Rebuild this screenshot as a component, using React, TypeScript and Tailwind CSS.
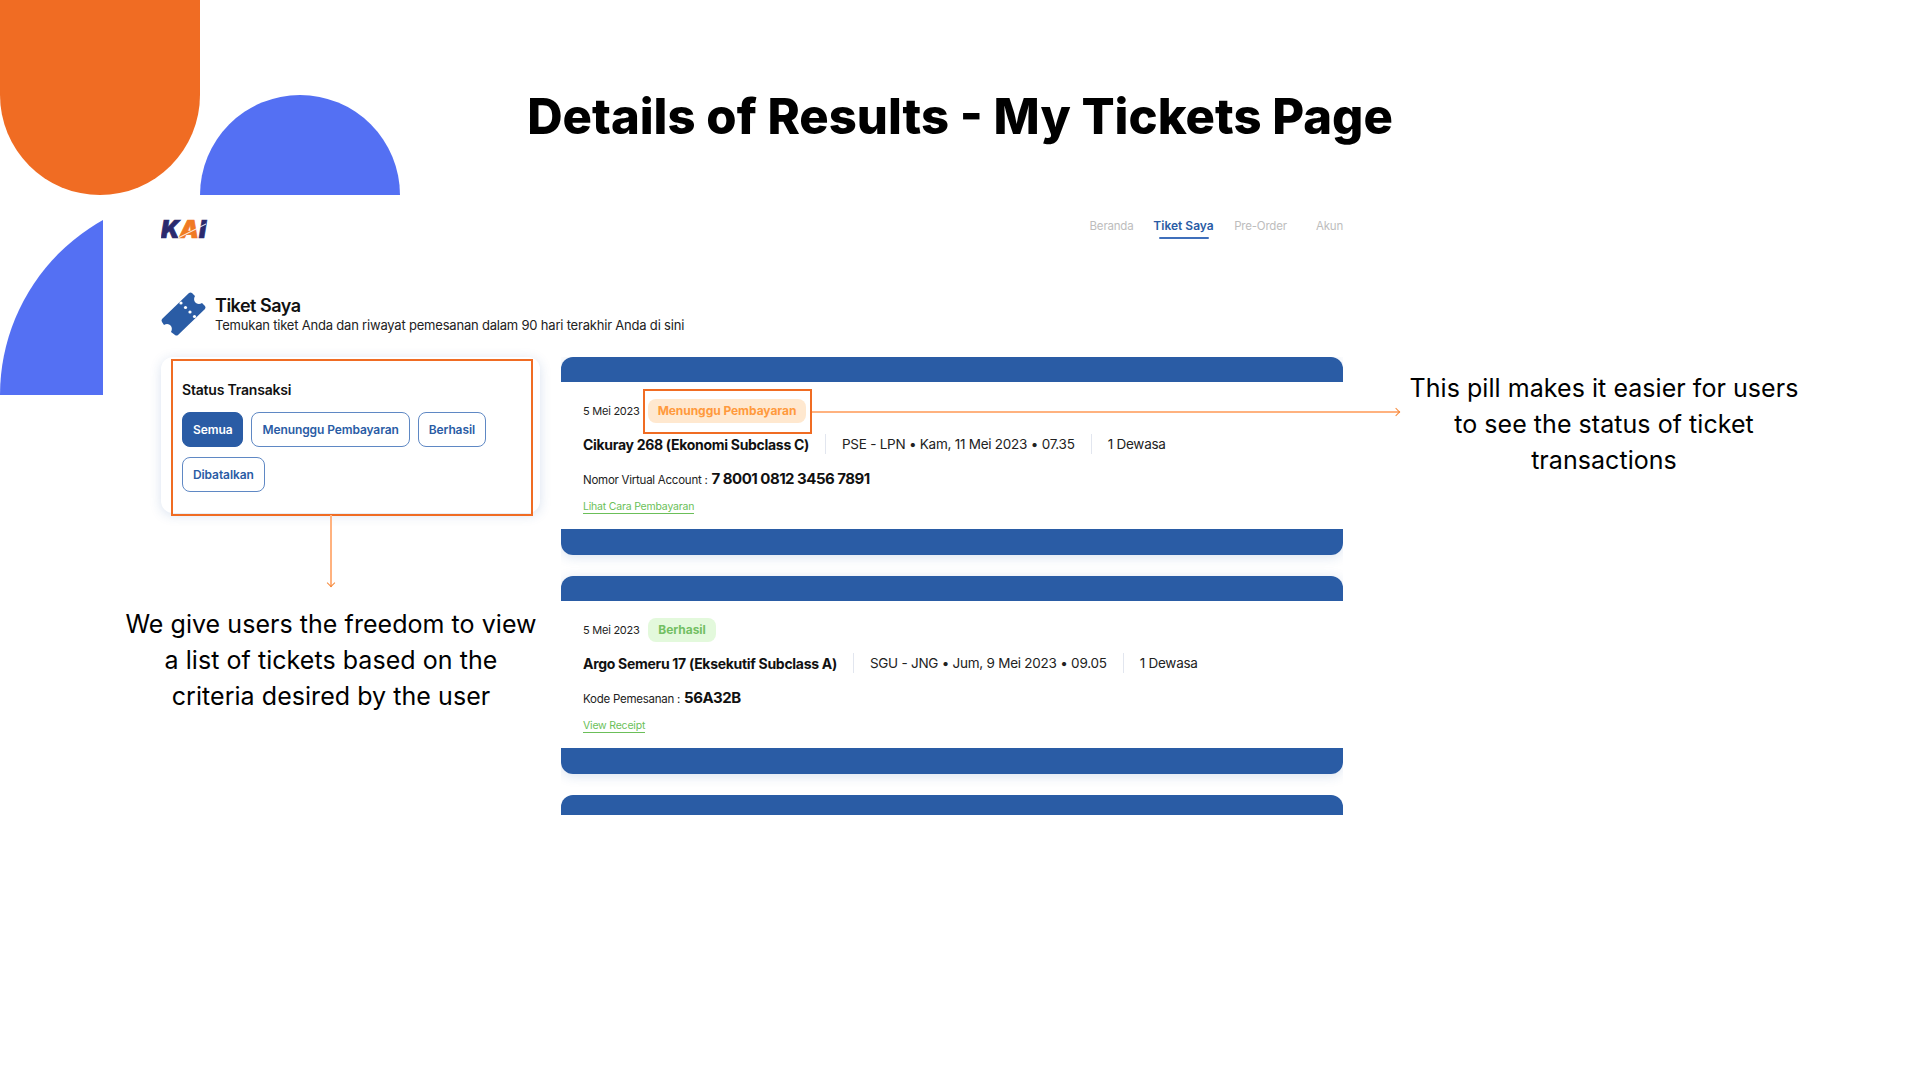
const filters = [
  { label: 'Semua', active: true },
  { label: 'Menunggu Pembayaran', active: false },
  { label: 'Berhasil', active: false },
  { label: 'Dibatalkan', active: false },
];

const navItems = [
  { label: 'Beranda', className: 'w-[43px]' },
  { label: 'Tiket Saya', className: 'w-[59px]', active: true },
  { label: 'Pre-Order', className: 'w-[53px]' },
  { label: 'Akun', className: 'w-[27px] ml-[8px]' },
];

const tickets = [
  {
    status: 'Menunggu Pembayaran',
    statusClass: 'bg-[#ffe8cf] text-[#ff9a3d] w-[158px]',
    name: 'Cikuray 268 (Ekonomi Subclass C)',
    route: 'PSE - LPN • Kam, 11 Mei 2023 • 07.35',
    codeLabel: 'Nomor Virtual Account :',
    code: '7 8001 0812 3456 7891',
    link: 'Lihat Cara Pembayaran',
  },
  {
    status: 'Berhasil',
    statusClass: 'bg-[#e3f9dc] text-[#72c063] w-[68px]',
    name: 'Argo Semeru 17 (Eksekutif Subclass A)',
    route: 'SGU - JNG • Jum, 9 Mei 2023 • 09.05',
    codeLabel: 'Kode Pemesanan :',
    code: '56A32B',
    link: 'View Receipt',
  },
];

const KaiLogo = () => (
  <svg width="48" height="32" viewBox="0 0 48 32" className="-mt-[6px]" aria-label="KAI">
    <text x="0" y="24" fontFamily="Inter, sans-serif" fontWeight="900" fontStyle="italic" fontSize="24" fill="#2b2a6e" stroke="#2b2a6e" strokeWidth="0.7" textLength="45" lengthAdjust="spacingAndGlyphs">
      K<tspan fill="#f07a24" stroke="#f07a24">A</tspan>I
    </text>
    <path d="M17 24 L45 10 L36 14.500 L19 23 Z" fill="#f07a24" stroke="#ffffff" strokeWidth="0.6" />
  </svg>
);

const TicketIcon = () => (
  <svg width="45" height="44" viewBox="0 0 45 44">
    <path
      d="M31 1 L34 4 C31 9 36 14 41 11 L44 14 Q45 15.500 44 17 L17 43 Q15.500 44 14 43 L10 40 C13 35 8 30 3 33 L1 30 Q0 28.500 1 27 L28 1 Q29.500 0 31 1 Z"
      fill="#2a5ca5"
    />
    <g fill="#ffffff">
      <circle cx="20" cy="11" r="1.600" />
      <circle cx="24.500" cy="15.500" r="1.600" />
      <circle cx="29" cy="20" r="1.600" />
      <circle cx="33.500" cy="24.500" r="1.600" />
    </g>
  </svg>
);

const Callout = ({ className, lines }: { className: string; lines: string[] }) => (
  <div className={`absolute w-[480px] text-center text-[25px] leading-[36px] tracking-[0.05px] text-black font-['Inter',sans-serif] ${className}`}>
    {lines.map((line) => (
      <div key={line} className="whitespace-nowrap">{line}</div>
    ))}
  </div>
);

const TicketCard = ({ ticket }: { ticket: (typeof tickets)[number] }) => (
  <div className="shrink-0 w-full h-[198px] bg-white rounded-[12px] overflow-hidden flex flex-col justify-between shadow-[0_2px_12px_rgba(42,92,165,0.18)]">
    <div className="h-[25px] bg-[#2a5ca5]" />
    <div className="flex-1 pl-[22px] pt-[17px]">
      <div className="flex items-center h-[24px] gap-[9px]">
        <span className="text-[11px] tracking-[-0.25px] text-[#222222] w-[56px] whitespace-nowrap">5 Mei 2023</span>
        <span className={`h-[24px] rounded-[8px] flex items-center justify-center text-[12px] tracking-[-0.05px] font-bold whitespace-nowrap ${ticket.statusClass}`}>
          {ticket.status}
        </span>
      </div>
      <div className="flex items-center h-[20px] mt-[11px] text-[13.5px] tracking-[-0.25px] text-[#222222] whitespace-nowrap">
        <span className="text-[14px] tracking-[-0.3px] font-bold text-[#111111]">{ticket.name}</span>
        <span className="mx-[16px] w-px h-[20px] bg-[#e2e6ef]" />
        <span>{ticket.route}</span>
        <span className="mx-[16px] w-px h-[20px] bg-[#e2e6ef]" />
        <span>1 Dewasa</span>
      </div>
      <div className="flex items-baseline gap-[4px] h-[20px] mt-[14px] whitespace-nowrap">
        <span className="text-[11.5px] tracking-[-0.25px] text-[#222222]">{ticket.codeLabel}</span>
        <span className="text-[15px] tracking-[-0.5px] font-bold text-[#111111]">{ticket.code}</span>
      </div>
      <div className="mt-[11px] h-[16px] flex items-center">
        <span className="text-[10.5px] tracking-[-0.2px] leading-[13px] text-[#6bbf59] border-b border-[#6bbf59] whitespace-nowrap">{ticket.link}</span>
      </div>
    </div>
    <div className="h-[26px] bg-[#2a5ca5]" />
  </div>
);

const App = () => {
  return (
    <div className="relative w-[1920px] h-[1080px] overflow-hidden bg-white font-['Inter',sans-serif]">
      {/* decorative shapes */}
      <div className="absolute left-0 top-0 w-[200px] h-[195px] bg-[#f06c23] rounded-b-[100px]" />
      <div className="absolute left-[200px] top-[95px] w-[200px] h-[100px] bg-[#5470f3] rounded-t-[100px]" />
      <div className="absolute left-0 top-[220px] w-[103px] h-[175px] overflow-hidden">
        <div className="w-[400px] h-[400px] -mt-[25px] rounded-full bg-[#5470f3]" />
      </div>

      <h1 className="pt-[85px] h-[220px] text-center text-[49px] leading-[64px] font-extrabold text-black">
        Details of Results - My Tickets Page
      </h1>

      <main className="ml-[161px] w-[1182px]">
        <header className="flex justify-between h-[20px]">
          <KaiLogo />
          <nav className="flex gap-[21px] h-[20px]">
            {navItems.map((item) => (
              <div key={item.label} className={`relative flex justify-center text-[11.5px] leading-[12px] whitespace-nowrap ${item.className} ${item.active ? 'text-[12px] font-semibold text-[#2a5ca5]' : 'tracking-[-0.2px] text-[#bdbdbd]'}`}>
                {item.label}
                {item.active && <span className="absolute left-[5px] right-[4px] top-[17px] h-[2px] bg-[#3f6fbb] rounded-full" />}
              </div>
            ))}
          </nav>
        </header>

        <section className="flex gap-[9px] mt-[52px] h-[65px]">
          <TicketIcon />
          <div className="pt-[2px]">
            <h2 className="text-[18px] leading-[23px] tracking-[-0.5px] font-semibold text-[#111111]">Tiket Saya</h2>
            <p className="text-[13px] leading-[16px] tracking-[-0.2px] text-[#222222]">Temukan tiket Anda dan riwayat pemesanan dalam 90 hari terakhir Anda di sini</p>
          </div>
        </section>

        <div className="flex gap-[21px] items-start">
          <aside className="relative w-[379px] h-[156px] bg-white rounded-[12px] shadow-[0_2px_12px_rgba(42,92,165,0.18)] pl-[21px] pt-[24px]">
            <h3 className="text-[14px] leading-[18px] tracking-[-0.2px] font-semibold text-[#111111]">Status Transaksi</h3>
            <div className="flex flex-wrap gap-x-[8px] gap-y-[10px] mt-[13px] w-[320px]">
              {filters.map((filter) => (
                <button
                  key={filter.label}
                  className={`h-[35px] px-[10px] rounded-[8px] border text-[12px] tracking-[-0.1px] font-semibold whitespace-nowrap ${filter.active ? 'bg-[#2a5ca5] border-[#2a5ca5] text-white' : 'bg-white border-[#5f88c4] text-[#2a5ca5]'}`}
                >
                  {filter.label}
                </button>
              ))}
            </div>
            {/* highlight box */}
            <div className="absolute left-[10px] top-[2px] w-[362px] h-[157px] border-2 border-[#f06c23]" />
          </aside>

          <div className="relative w-[782px] h-[458px] overflow-hidden flex flex-col gap-[21px]">
            {tickets.map((ticket) => (
              <TicketCard key={ticket.name} ticket={ticket} />
            ))}
            <div className="shrink-0 h-[40px] bg-[#2a5ca5] rounded-t-[12px]" />
            <div className="absolute left-[82px] top-[32px] w-[169px] h-[45px] border-2 border-[#f06c23]" />
          </div>
        </div>
      </main>

      {/* callouts */}
      <div className="absolute left-[812px] top-[411px] w-[588px] h-[2px] bg-[#ffb27f]" />
      <span className="absolute left-[1393px] top-[409px] w-[6px] h-[6px] rotate-45 border-t border-r border-[#f58a3c]" />
      <div className="absolute left-[330px] top-[515px] w-[2px] h-[72px] bg-[#ffb27f]" />
      <span className="absolute left-[328px] top-[580px] w-[6px] h-[6px] rotate-45 border-b border-r border-[#f58a3c]" />

      <Callout className="left-[1364px] top-[370px]" lines={['This pill makes it easier for users', 'to see the status of ticket', 'transactions']} />
      <Callout className="left-[91px] top-[606px]" lines={['We give users the freedom to view', 'a list of tickets based on the', 'criteria desired by the user']} />
    </div>
  );
};

export default App;
